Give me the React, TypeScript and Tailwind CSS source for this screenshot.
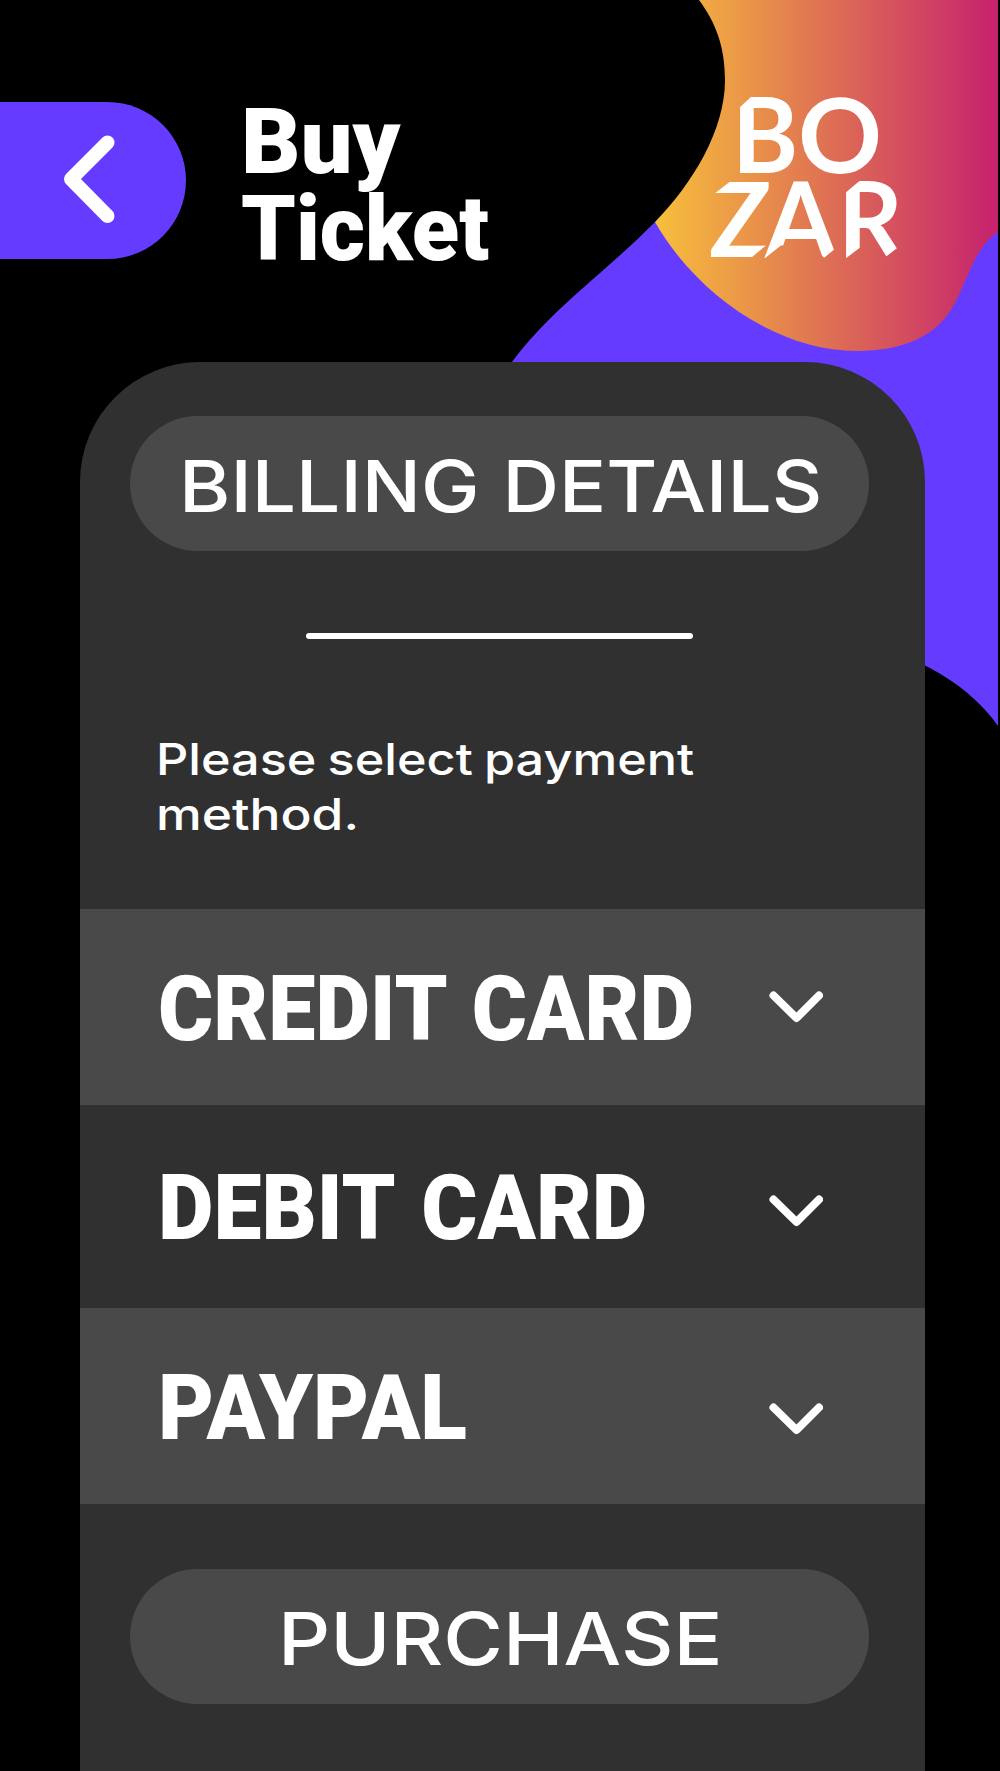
import React from 'react';

const methods = [
  { name: 'CREDIT CARD', row: 'h-[196px] pt-[56px] bg-[#494949]', label: 'scale-x-[0.937] [word-spacing:6px]', icon: 'top-[82px]' },
  { name: 'DEBIT CARD', row: 'h-[203px] pt-[59px]', label: 'scale-x-[0.953] [word-spacing:7px]', icon: 'top-[90px]' },
  { name: 'PAYPAL', row: 'h-[195.5px] pt-[56px] bg-[#494949]', label: 'scale-x-[0.957]', icon: 'top-[95px]' },
];

function Backdrop() {
  return (
    <svg className="absolute inset-0" width="1000" height="1771" viewBox="0 0 1000 1771" fill="none">
      <defs>
        <linearGradient id="sunset" gradientUnits="userSpaceOnUse" x1="655" y1="0" x2="998" y2="0">
          <stop stopColor="#f7bf3b" />
          <stop offset="1" stopColor="#c6226d" />
        </linearGradient>
        {/* Chiselled corners of the wordmark, one clip per letter */}
        <clipPath id="cut-b">
          <path d="M756.4 92H795V180H736V110.7Z" />
        </clipPath>
        <clipPath id="cut-z">
          <path d="M732 180H772V240.5L746 262H700V205Z" />
        </clipPath>
        <clipPath id="cut-a">
          <path d="M760 175H845V240.5L819 262H800V245.5H781L760 262Z" />
        </clipPath>
        <clipPath id="cut-r">
          <path d="M863 178H905V242L879 262H870V240L841 262V196.5Z" />
        </clipPath>
      </defs>
      <path d="M655 222C606 272 552 308 512 362V648H880C925 661 971 687 998 726V180Z" fill="#653bff" />
      <path
        d="M699 0C716 23 725 47 725 80C725 130 693 183 655 222C695 292 775 351 857 351C900 351 937 338 955 303C968 279 975 247 998 232V0Z"
        fill="url(#sunset)"
      />
      <g fill="#fff" fontFamily="Lato" fontWeight="700">
        <g clipPath="url(#cut-b)">
          <text transform="translate(732 173) scale(.95 1)" fontSize="106">B</text>
        </g>
        <text transform="translate(798 172.5)" fontSize="104">O</text>
        <g clipPath="url(#cut-z)">
          <text transform="translate(709 257)" fontSize="103">Z</text>
        </g>
        <g clipPath="url(#cut-a)">
          <text transform="translate(765 258) scale(.98 1)" fontSize="105">A</text>
        </g>
        <g clipPath="url(#cut-r)">
          <text transform="translate(838 258) scale(.96 1)" fontSize="105">R</text>
        </g>
      </g>
    </svg>
  );
}

function Chevron({ className }: { className: string }) {
  return (
    <svg className={className} width="54" height="32" viewBox="0 0 54 32" fill="none" stroke="#fff" strokeWidth="8" strokeLinecap="round" strokeLinejoin="round">
      <path d="M4.5 4.5L27.5 27L50 4.5" />
    </svg>
  );
}

export default function App() {
  return (
    <div className="relative h-[1771px] w-[1000px] overflow-hidden bg-black text-white">
      <Backdrop />
      <div className="relative flex h-full flex-col">
        <header className="flex h-[362px] shrink-0 items-start">
          <button className="mt-[101.5px] h-[157px] w-[186px] rounded-r-[78.5px] bg-[#653bff]">
            <svg width="186" height="157" viewBox="0 0 186 157" fill="none" stroke="#fff" strokeWidth="14" strokeLinecap="round" strokeLinejoin="round">
              <path d="M107.5 40.5L71 77L107.5 114" />
            </svg>
          </button>
          <h1 className="mt-[99px] ml-[55px] font-[Roboto,sans-serif] text-[90px] leading-[87px] font-black">
            <span className="block origin-left scale-x-[1.025]">Buy</span>
            <span className="block origin-left scale-x-[0.967]">Ticket</span>
          </h1>
        </header>

        <main className="ml-[80px] flex w-[845px] grow flex-col rounded-t-[120px] bg-[#303030] font-[Inter,sans-serif] [font-weight:550]">
          <div className="mt-[54px] ml-[50px] flex h-[135px] w-[738.5px] shrink-0 items-center justify-center rounded-[67.5px] bg-[#494949]">
            <h2 className="relative top-[3.5px] left-[1px] scale-x-[1.095] text-[71.5px] leading-none whitespace-nowrap [word-spacing:2px]">BILLING DETAILS</h2>
          </div>
          <div className="mt-[82px] ml-[225.5px] h-[6px] w-[387.5px] shrink-0 rounded-full bg-white" />
          <p className="mt-[93px] ml-[76px] h-[177px] shrink-0 text-[44px] leading-[55px] whitespace-nowrap">
            <span className="block origin-left scale-x-[1.145] [word-spacing:-2px]">Please select payment</span>
            <span className="block origin-left scale-x-[1.17]">method.</span>
          </p>

          {methods.map((m) => (
            <button key={m.name} className={`relative flex shrink-0 items-start pl-[78px] ${m.row}`}>
              <span className={`block origin-left font-[Roboto,sans-serif] text-[90px] leading-[90px] font-black whitespace-nowrap ${m.label}`}>
                {m.name}
              </span>
              <Chevron className={`absolute left-[689px] ${m.icon}`} />
            </button>
          ))}

          <button className="mt-[65.5px] ml-[50px] flex h-[135px] w-[738.5px] shrink-0 items-center justify-center rounded-[67.5px] bg-[#494949]">
            <span className="relative top-[1.5px] left-[1px] scale-x-[1.115] text-[73px] leading-none">PURCHASE</span>
          </button>
        </main>
      </div>
    </div>
  );
}
